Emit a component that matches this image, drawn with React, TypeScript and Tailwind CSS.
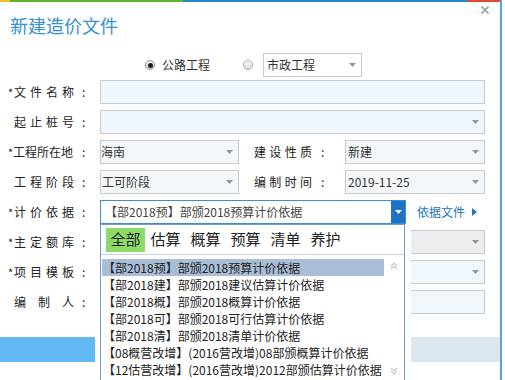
import React from "react";

const FONT = { fontFamily: '"Noto Sans CJK SC", "Liberation Sans", sans-serif' };

const tabs = ["全部", "估算", "概算", "预算", "清单", "养护"];

const basisList = [
  "【部2018预】部颁2018预算计价依据",
  "【部2018建】部颁2018建议估算计价依据",
  "【部2018概】部颁2018概算计价依据",
  "【部2018可】部颁2018可行估算计价依据",
  "【部2018清】部颁2018清单计价依据",
  "【08概营改增】(2016营改增)08部颁概算计价依据",
  "【12估营改增】(2016营改增)2012部颁估算计价依据",
];

function Arrow({ color = "#8e98a3" }: { color?: string }) {
  return (
    <svg width="7" height="4" viewBox="0 0 7 4" className="shrink-0">
      <path d="M0 0 H7 L3.5 4 Z" fill={color} />
    </svg>
  );
}

function Label({ text, req }: { text: string; req?: boolean }) {
  return (
    <div className="flex w-[100px] shrink-0 items-center text-[12px] text-[#222]">
      <span className="w-[8px]" />
      <span className="w-[6px] text-[11px] leading-none">{req ? "*" : ""}</span>
      <span className="flex w-[60px] justify-between">
        {text.split("").map((c, i) => (
          <span key={i}>{c}</span>
        ))}
      </span>
      <span className="ml-[8px]">:</span>
    </div>
  );
}

function RightLabel({ text }: { text: string }) {
  return (
    <div className="flex w-[106px] shrink-0 items-center pl-[15px] text-[12px] text-[#222]">
      <span className="flex w-[58px] justify-between">
        {text.split("").map((c, i) => (
          <span key={i}>{c}</span>
        ))}
      </span>
      <span className="ml-[9px]">:</span>
    </div>
  );
}

function Field({
  value,
  arrow,
  className,
}: {
  value?: string;
  arrow?: boolean;
  className?: string;
}) {
  return (
    <div
      className={`flex h-[24px] items-center justify-between border border-[#c4cbd3] pr-[5px] text-[12px] text-[#333] ${className ?? ""}`}
    >
      <span className="truncate">{value ?? ""}</span>
      {arrow && <Arrow />}
    </div>
  );
}

export default function App() {
  return (
    <div className="relative h-[380px] w-[505px] overflow-hidden bg-white" style={FONT}>
      <div className="flex h-[380px] w-[502px] flex-col border-r-2 border-[#5aa2dc]">
        <div className="flex h-[2px] shrink-0">
          <div className="w-[10px] bg-[#f4be1c]" />
          <div className="w-[173px] bg-[#5db52f]" />
          <div className="flex-1 bg-[#1f88d0]" />
          <div className="w-[33px] bg-[#e5493a]" />
        </div>

        <div className="flex h-[51px] shrink-0 items-start justify-between">
          <h1 className="pl-[10px] pt-[11px] text-[18px] leading-[24px] text-[#3590d2]">新建造价文件</h1>
          <svg width="8" height="8" viewBox="0 0 8 8" className="mr-[11px] mt-[4px]">
            <path d="M0.5 0.5 L7.5 7.5 M7.5 0.5 L0.5 7.5" stroke="#98a2ae" strokeWidth="1.6" />
          </svg>
        </div>

        <div className="flex h-[24px] shrink-0 items-center pl-[145px] text-[12px] text-[#333]">
          <span className="flex h-[10px] w-[10px] items-center justify-center rounded-full border border-[#8e959c] bg-gradient-to-b from-[#f4f4f4] to-[#d8dbde]">
            <span className="h-[5px] w-[5px] rounded-full bg-[#1c1c1c]" />
          </span>
          <span className="ml-[7px]">公路工程</span>
          <span className="ml-[33px] h-[10px] w-[10px] rounded-full border border-[#a5acb3] bg-gradient-to-b from-[#fafafa] to-[#d6dade]" />
          <Field value="市政工程" arrow className="ml-[10px] w-[99px] bg-white pl-[3px]" />
        </div>

        <div className="mt-[3px] flex flex-col gap-[6px]">
          <div className="flex items-center">
            <Label text="文件名称" req />
            <Field className="w-[385px] bg-[#eef5fb]" />
          </div>
          <div className="flex items-center">
            <Label text="起止桩号" />
            <Field arrow className="w-[385px] bg-[#eef5fb]" />
          </div>
          <div className="flex items-center">
            <div className="flex w-[100px] shrink-0 items-center text-[12px] text-[#222]">
              <span className="w-[8px]" />
              <span className="w-[5px] text-[11px] leading-none">*</span>
              <span className="tracking-[0px]">工程所在地</span>
              <span className="ml-[9px]">:</span>
            </div>
            <Field value="海南" arrow className="w-[139px] bg-[#f3f7fa]" />
            <RightLabel text="建设性质" />
            <Field value="新建" arrow className="w-[140px] bg-[#f3f7fa] pl-[2px]" />
          </div>
          <div className="flex items-center">
            <Label text="工程阶段" />
            <Field value="工可阶段" arrow className="w-[139px] bg-[#f3f7fa] pl-[1px]" />
            <RightLabel text="编制时间" />
            <Field value="2019-11-25" arrow className="w-[140px] bg-[#f3f7fa] pl-[2px]" />
          </div>
          <div className="flex items-center">
            <Label text="计价依据" req />
            <div className="flex h-[24px] w-[306px] items-center justify-between border border-[#3d8dd1] bg-white text-[12px] text-[#444]">
              <span className="pl-[4px]">【部2018预】部颁2018预算计价依据</span>
              <span className="flex h-full w-[14px] items-center justify-center bg-[#1f72c4]">
                <Arrow color="#ffffff" />
              </span>
            </div>
            <span className="ml-[11px] flex items-center gap-[7px] text-[12px] text-[#2074c0]">
              依据文件
              <svg width="5" height="8" viewBox="0 0 5 8">
                <path d="M0 0 L5 4 L0 8 Z" fill="#2074c0" />
              </svg>
            </span>
          </div>
          <div className="flex items-center">
            <Label text="主定额库" req />
            <Field arrow className="w-[385px] bg-[#ebedef]" />
          </div>
          <div className="flex items-center">
            <Label text="项目模板" req />
            <Field arrow className="w-[385px] bg-[#f1f6fa]" />
          </div>
          <div className="flex items-center">
            <Label text="编制人" />
            <Field className="w-[385px] bg-[#f1f6fa]" />
          </div>
        </div>

        <div className="mt-[23px] flex h-[25px] shrink-0">
          <div className="w-[95px] bg-[#63b9f3]" />
          <div className="ml-[5px] flex-1 bg-[#dce6ef]" />
        </div>
      </div>

      <div className="absolute left-[100px] top-[224px] h-[170px] w-[305px] border border-[#6c9fd2] bg-white text-[#222] shadow-[6px_0_0_0_#ffffff]">
        <div className="flex h-[30px] items-center gap-[1px] border-b border-[#cdd0d4] pl-[5px]">
          {tabs.map((t, i) => (
            <span
              key={t}
              className={`flex h-[24px] w-[39px] items-center justify-center text-[15px] ${i === 0 ? "bg-[#8cdb68]" : ""}`}
            >
              {t}
            </span>
          ))}
        </div>
        <div className="flex pt-[4px]">
          <div className="w-[283px] pl-[1px]">
            {basisList.map((b, i) => (
              <div
                key={b}
                className={`h-[17px] whitespace-nowrap pl-[1px] text-[12px] leading-[17px] ${i === 0 ? "bg-[#a8bdd6]" : ""}`}
              >
                {b}
              </div>
            ))}
          </div>
          <div className="flex h-[119px] flex-1 flex-col items-center justify-between py-[3px]">
            <svg width="8" height="8" viewBox="0 0 8 8">
              <path d="M1 4 L4 1 L7 4 M1 7 L4 4 L7 7" stroke="#c4c8cc" strokeWidth="1.2" fill="none" />
            </svg>
            <svg width="8" height="8" viewBox="0 0 8 8">
              <path d="M1 1 L4 4 L7 1 M1 4 L4 7 L7 4" stroke="#c4c8cc" strokeWidth="1.2" fill="none" />
            </svg>
          </div>
        </div>
      </div>
    </div>
  );
}
